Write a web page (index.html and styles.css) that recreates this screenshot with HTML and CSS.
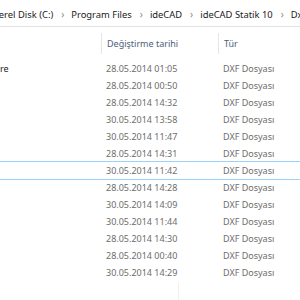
FILE: index.html
```html
<!DOCTYPE html>
<html lang="tr">
<head>
  <meta charset="UTF-8">
  <title>DXF</title>
  <link rel="stylesheet" href="styles.css">
</head>
<body>
  <!-- Adres cubugu -->
  <div class="address">
    <span class="crumb first">Yerel Disk (C:)</span>
    <span class="sep">&rsaquo;</span>
    <span class="crumb">Program Files</span>
    <span class="sep">&rsaquo;</span>
    <span class="crumb">ideCAD</span>
    <span class="sep">&rsaquo;</span>
    <span class="crumb">ideCAD Statik 10</span>
    <span class="sep">&rsaquo;</span>
    <span class="crumb">Dxf</span>
  </div>

  <!-- Dosya listesi -->
  <div class="list">
    <div class="head">
      <div class="col name"></div>
      <div class="col date">Değiştirme tarihi</div>
      <div class="col type">Tür</div>
    </div>
    <div class="row"><div class="col name">re</div><div class="col date">28.05.2014 01:05</div><div class="col type">DXF Dosyası</div></div>
    <div class="row"><div class="col name"></div><div class="col date">28.05.2014 00:50</div><div class="col type">DXF Dosyası</div></div>
    <div class="row"><div class="col name"></div><div class="col date">28.05.2014 14:32</div><div class="col type">DXF Dosyası</div></div>
    <div class="row"><div class="col name"></div><div class="col date">30.05.2014 13:58</div><div class="col type">DXF Dosyası</div></div>
    <div class="row"><div class="col name"></div><div class="col date">30.05.2014 11:47</div><div class="col type">DXF Dosyası</div></div>
    <div class="row"><div class="col name"></div><div class="col date">28.05.2014 14:31</div><div class="col type">DXF Dosyası</div></div>
    <div class="row focus"><div class="col name"></div><div class="col date">30.05.2014 11:42</div><div class="col type">DXF Dosyası</div></div>
    <div class="row"><div class="col name"></div><div class="col date">28.05.2014 14:28</div><div class="col type">DXF Dosyası</div></div>
    <div class="row"><div class="col name"></div><div class="col date">30.05.2014 14:09</div><div class="col type">DXF Dosyası</div></div>
    <div class="row"><div class="col name"></div><div class="col date">30.05.2014 11:44</div><div class="col type">DXF Dosyası</div></div>
    <div class="row"><div class="col name"></div><div class="col date">28.05.2014 14:30</div><div class="col type">DXF Dosyası</div></div>
    <div class="row"><div class="col name"></div><div class="col date">28.05.2014 00:40</div><div class="col type">DXF Dosyası</div></div>
    <div class="row"><div class="col name"></div><div class="col date">30.05.2014 14:29</div><div class="col type">DXF Dosyası</div></div>
    <div class="filler"></div>
  </div>
</body>
</html>
```

FILE: styles.css
```css
body {
  margin: 0;
  background: #fff;
  font-family: "Noto Sans", sans-serif;
  font-size: 9px;
  overflow: hidden;
}

.address {
  height: 24px;
  padding-top: 2px;
  border-bottom: 1px solid #e3e3e3;
  display: flex;
  align-items: center;
  white-space: nowrap;
  font-size: 9.4px;
  color: #1b1b1b;
  overflow: hidden;
}
.crumb.first {
  margin-left: -6px;
}
.sep {
  color: #8a8a8a;
  font-size: 10px;
  padding: 0 7px 0 8px;
}

.list {
  width: 300px;
}
.head,
.row {
  display: grid;
  grid-template-columns: 101px 117px 1fr;
  white-space: nowrap;
}
.head {
  height: 33px;
  color: #4c607a;
}
.head .col {
  margin-top: 6px;
  height: 21px;
  line-height: 21px;
}
.head .date,
.head .type {
  border-left: 1px solid #e5e5e5;
  padding-left: 5px;
}
.row {
  height: 17px;
  line-height: 17px;
  color: #6d6d6d;
}
.row .date,
.row .type {
  padding-left: 5px;
}
.row .name {
  color: #1b1b1b;
}
.row.focus {
  outline: 1px solid #99d1ff;
}
.filler {
  margin-left: 178px;
  margin-top: 2px;
  height: 20px;
  border-left: 1px solid #f0f0f0;
}
```
